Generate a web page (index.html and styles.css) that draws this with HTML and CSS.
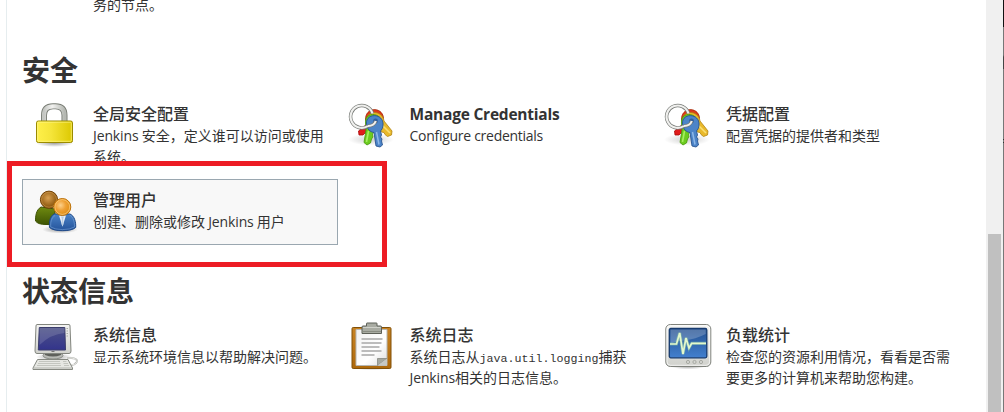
FILE: index.html
```html
<!DOCTYPE html>
<html lang="zh-CN">
<head>
<meta charset="utf-8">
<title>Jenkins</title>
<link rel="stylesheet" href="styles.css">
</head>
<body>
<svg class="defs" aria-hidden="true">
  <defs>
    <linearGradient id="gold"><stop offset="0" stop-color="#fff04a"/><stop offset=".4" stop-color="#f5e53a"/><stop offset="1" stop-color="#dcc800"/></linearGradient>
    <linearGradient id="metal"><stop offset="0" stop-color="#c4c6c2"/><stop offset=".4" stop-color="#f2f2f0"/><stop offset="1" stop-color="#b5b8b2"/></linearGradient>
    <linearGradient id="shell" x2="0" y2="1"><stop offset="0" stop-color="#f4f4f2"/><stop offset="1" stop-color="#d0d1cc"/></linearGradient>
    <linearGradient id="indigo" x2="0" y2="1"><stop offset="0" stop-color="#4d5286"/><stop offset="1" stop-color="#33348c"/></linearGradient>
    <linearGradient id="azure" x2="0" y2="1"><stop offset="0" stop-color="#24508f"/><stop offset="1" stop-color="#4280cf"/></linearGradient>
    <linearGradient id="wood" x2="0" y2="1"><stop offset="0" stop-color="#c98424"/><stop offset="1" stop-color="#ad680b"/></linearGradient>
    <linearGradient id="paper" x2="1" y2="1"><stop offset="0" stop-color="#f1f1f1"/><stop offset=".6" stop-color="#fff"/><stop offset="1" stop-color="#ddd"/></linearGradient>
    <radialGradient id="brown" cx=".45" cy=".4"><stop offset="0" stop-color="#d9a052"/><stop offset="1" stop-color="#8f5a10"/></radialGradient>
    <radialGradient id="orange" cx=".4" cy=".4"><stop offset="0" stop-color="#fcd08b"/><stop offset=".6" stop-color="#efa136"/><stop offset="1" stop-color="#e5941f"/></radialGradient>
    <linearGradient id="olive" x2="0" y2="1"><stop offset="0" stop-color="#6f8a10"/><stop offset="1" stop-color="#3f5503"/></linearGradient>
    <linearGradient id="blue" x2="0" y2="1"><stop offset="0" stop-color="#4a82c6"/><stop offset="1" stop-color="#24539b"/></linearGradient>
    <radialGradient id="shade"><stop offset="0" stop-color="#000" stop-opacity=".38"/><stop offset="1" stop-color="#000" stop-opacity="0"/></radialGradient>
    <symbol id="keys" viewBox="0 0 48 48">
      <ellipse cx="23" cy="38.500" rx="23" ry="6" fill="url(#shade)" opacity=".5"/>
      <path d="M19 23 10.500 30 11 34 15 34 17 32 20 31.500 25 26z" fill="#e01b1b" stroke="#a80808" stroke-width=".8"/>
      <path d="M17.500 19C17 5.500 34.500 5.500 35.500 17L32 24 20 23z" fill="#dc3a1b" stroke="#a52a08" stroke-width=".8"/>
      <path d="M18.500 20C18.500 8.500 34.500 9 36 20L44 30 43.500 34 39.500 35.500 37 33.500 36 31.500 33.500 31 28 24z" fill="#e9b92b" stroke="#b08312" stroke-width=".8"/>
      <path d="M33 23 42 32" stroke="#f8df75" stroke-width="1.600"/>
      <path d="M17.500 22C16.500 10.500 32 11 34 21L28 29 24.500 33 25 36 23.500 38 22.500 42 19 44 16 41.500 18 29z" fill="#6ccc1f" stroke="#459709" stroke-width=".8"/>
      <path d="M20.500 30 18.500 41" stroke="#a8ee62" stroke-width="1.600"/>
      <path d="M18.500 23C17.500 12 34 12 35 22 35.500 26.500 33.500 29 32.500 30L33.500 34 32.500 36 34 38 33.500 40 34.500 44 32 46 28 45 26 31.500C22 31 19 28 18.500 23z" fill="#4c84c8" stroke="#28548f" stroke-width=".9"/>
      <path d="M28.500 31 31 43.500" stroke="#8eb8e8" stroke-width="1.500"/>
      <circle cx="27.500" cy="20" r="2.400" fill="#315f9b"/>
      <path d="M20 25A11.200 11.200 0 1 1 24.500 12.500M27.800 20C26.500 23.500 23.500 25 20 25" fill="none" stroke="#777a76" stroke-width="3.500"/>
      <path d="M20 25A11.200 11.200 0 1 1 24.500 12.500M27.800 20C26.500 23.500 23.500 25 20 25" fill="none" stroke="#f0f0ee" stroke-width="2.100"/>
    </symbol>
  </defs>
</svg>
<div class="page">
  <main class="panel">
    <p class="previous">务的节点。</p>
    <section>
      <h2>安全</h2>
      <div class="grid">
        <a class="item">
          <svg class="icon" viewBox="0 0 48 48">
            <ellipse cx="23.500" cy="42" rx="19" ry="4" fill="url(#shade)"/>
            <path d="M12.500 22V14Q12.500 5 21.500 5H24Q33 5 33 14V22" transform="translate(.5 .3)" fill="none" stroke="#777b73" stroke-width="6"/>
            <path d="M12.500 22V14Q12.500 5 21.500 5H24Q33 5 33 14V22" transform="translate(.5 .3)" fill="none" stroke="url(#metal)" stroke-width="4.200"/>
            <rect x="5.500" y="20" width="36" height="21.500" rx="1.800" fill="url(#gold)" stroke="#9b8b00"/>
            <rect x="6.700" y="21.200" width="33.600" height="19.100" rx="1" fill="none" stroke="#fff792" stroke-opacity=".65"/>
          </svg>
          <div class="copy"><h3>全局安全配置</h3><p><span class="jk">Jenkins</span> 安全，定义谁可以访问或使用<br>系统。</p></div>
        </a>
        <a class="item">
          <svg class="icon"><use href="#keys"/></svg>
          <div class="copy"><h3 class="latin-title">Manage Credentials</h3><p class="latin">Configure credentials</p></div>
        </a>
        <a class="item">
          <svg class="icon"><use href="#keys"/></svg>
          <div class="copy"><h3>凭据配置</h3><p>配置凭据的提供者和类型</p></div>
        </a>
        <a class="item active">
          <svg class="icon" viewBox="0 0 48 48">
            <ellipse cx="29" cy="42.500" rx="18" ry="4" fill="url(#shade)"/>
            <path d="M10 20C5 23 4.500 29 4.500 34Q7 37.500 15 37.500H24V22z" fill="url(#olive)" stroke="#3d5204"/>
            <circle cx="18" cy="12.700" r="8.600" fill="url(#brown)" stroke="#724407"/>
            <circle cx="18" cy="12.700" r="7.500" fill="none" stroke="#e0ae68" stroke-opacity=".45"/>
            <path d="M23 27C18.500 30 18 36 18.500 40.500Q22 43.700 31.500 43.700 41 43.700 44.700 40.500C45 35 43.500 29 39 27z" fill="url(#blue)" stroke="#1f4a89"/>
            <path d="M24 28.500C20 31 19.500 36 19.700 40Q24 42.600 31.500 42.600 39 42.600 43.500 40C43.500 35 42.500 30 38.500 28" fill="none" stroke="#83aee0" stroke-opacity=".5"/>
            <path d="M28 28.500H35L31.500 39.500z" fill="#eaf0f7"/><path d="M30 29.500H33L32.200 32 32.500 37 31.500 39.500 30.500 37 30.900 32z" fill="#b9cce1"/>
            <circle cx="31.300" cy="20" r="8.500" fill="url(#orange)" stroke="#bd7209"/>
            <circle cx="31.300" cy="20" r="7.400" fill="none" stroke="#ffd895" stroke-opacity=".6"/>
          </svg>
          <div class="copy"><h3>管理用户</h3><p>创建、删除或修改 <span class="jk">Jenkins</span> 用户</p></div>
        </a>
      </div>
    </section>
    <section>
      <h2>状态信息</h2>
      <div class="grid">
        <a class="item">
          <svg class="icon" viewBox="0 0 48 48">
            <ellipse cx="23" cy="35" rx="18" ry="4" fill="url(#shade)"/>
            <path d="M34 41Q38 44.500 43 42.500C49 39 46 35.500 36 36" fill="none" stroke="#aaaca7" stroke-width="1.800"/>
            <path d="M34 41Q38 44.500 43 42.500C49 39 46 35.500 36 36" fill="none" stroke="#f3f3f1" stroke-width=".9"/>
            <ellipse cx="22" cy="33.500" rx="10" ry="3.500" fill="#b9bbb6" stroke="#8a8d87"/>
            <path d="M14 31.500H30V33Q22 36 14 33z" fill="#5e605b"/>
            <path d="M6 2.500H38Q39 2.500 39 4L40 29Q40 31.500 38 31.500H6Q4 31.500 4 29L5 4Q5 2.500 6 2.500z" fill="url(#shell)" stroke="#82857e"/>
            <path d="M8.300 5.500H33.800L34.500 28H7.300z" fill="url(#indigo)" stroke="#3b3d6c"/>
            <path d="M8.800 6H33.400V11Q20 12 8.500 23z" fill="#fff" opacity=".14"/>
            <path d="M35.500 6.500H37M35.500 9H37M35.500 11.500H37M35.500 14H37" stroke="#a9aca5"/>
            <path d="M20.500 29.500H23.500" stroke="#777"/>
            <path d="M6.500 37.500H37L41.500 46V47.500H2V46z" fill="#e6e7e3" stroke="#858881"/>
            <path d="M8 39.500H29M7 41.500H29.500M6 43.500H30M32 39.500H35.500M32.500 41.500H37M33 43.500H38" stroke="#c3c5bf"/>
            <path d="M3 46H41" stroke="#b0b2ac"/>
          </svg>
          <div class="copy"><h3>系统信息</h3><p>显示系统环境信息以帮助解决问题。</p></div>
        </a>
        <a class="item">
          <svg class="icon" viewBox="0 0 48 48">
            <ellipse cx="23.500" cy="46" rx="20" ry="2" fill="url(#shade)"/>
            <rect x="4" y="5.500" width="39" height="41" rx="1.200" fill="url(#wood)" stroke="#815008"/>
            <path d="M8 7.500H39V43.500H8z" fill="url(#paper)" stroke="#b6b6b2"/>
            <path d="M29.500 43.500V36.500H39z" fill="#a5a8a0" stroke="#858881" stroke-width=".8"/>
            <path d="M39 36.500V43.500H29.500z" fill="#c6c8c3"/>
            <path d="M13.500 17H34.500M13.500 21H33.500M13.500 25H31.500M13.500 29H33.500M13.500 33H26.500" stroke="#bcbcbc" stroke-width="1.800"/>
            <path d="M15 4H18.500V1.500Q18.500 1 19 1H28.500Q29 1 29 1.500V4H32.500Q33.500 4 33.500 5V11.500H14V5Q14 4 15 4z" fill="#a9aca3" stroke="#5d6058"/>
            <path d="M15 5.500H32.500" stroke="#cfd1ca"/><path d="M14.500 9.500H33" stroke="#898c82"/>
          </svg>
          <div class="copy"><h3>系统日志</h3><p>系统日志从<code>java.util.logging</code>捕获<br><span class="jk">Jenkins</span>相关的日志信息。</p></div>
        </a>
        <a class="item">
          <svg class="icon" viewBox="0 0 48 48">
            <ellipse cx="24" cy="44" rx="18" ry="3.500" fill="url(#shade)"/>
            <rect x="1.800" y="2.500" width="45" height="42" rx="4.500" fill="url(#shell)" stroke="#7f827c"/>
            <rect x="3" y="3.700" width="42.600" height="39.600" rx="3.500" fill="none" stroke="#fff" stroke-opacity=".7"/>
            <rect x="5.300" y="6.500" width="37.500" height="29.300" rx="1.500" fill="url(#azure)" stroke="#173b6f" stroke-width="1.300"/>
            <path d="M6.500 7.500H41.700V12Q32 17 20 18.500 11 19 6.500 22z" fill="#fff" opacity=".22"/>
            <path d="M6 22H12.500L15.700 11 19 32 22 16 25 26 27.700 21.300H42" fill="none" stroke="#8fd0a3" stroke-opacity=".5" stroke-width="3.200"/>
            <path d="M6 22H12.500L15.700 11 19 32 22 16 25 26 27.700 21.300H42" fill="none" stroke="#e4f8cc" stroke-width="1.700"/>
            <g fill="#d5d6d2" stroke="#a1a49d" stroke-width=".9"><circle cx="24" cy="40" r="1.600"/><circle cx="30.500" cy="40" r="1.600"/><circle cx="37" cy="40" r="1.600"/></g>
          </svg>
          <div class="copy"><h3>负载统计</h3><p>检查您的资源利用情况，看看是否需<br>要更多的计算机来帮助您构建。</p></div>
        </a>
      </div>
    </section>
  </main>
  <div class="scrollbar"><div class="thumb"></div></div>
  <div class="edge"></div>
  <div class="highlight"></div>
</div>
</body>
</html>
```
FILE: styles.css
```css
* { box-sizing: border-box; }
body { margin: 0; background: #fff; color: #333; font: 14px/21px "Noto Sans", "Noto Sans CJK SC", sans-serif; }
h2, h3, p { margin: 0; }
.defs { position: absolute; width: 0; height: 0; }
.page { position: relative; display: flex; width: 1004px; height: 412px; overflow: hidden; }
.panel { width: 980px; margin-left: 6px; padding-left: 15px; border-left: 1px solid #e6edef; flex: none; font-family: "Noto Sans CJK SC", sans-serif; }
.previous { height: 24px; padding-left: 71px; line-height: 21px; margin-top: -6px; margin-bottom: 6px; }
h2 { height: 69px; padding-top: 25px; font-size: 28px; line-height: 40px; font-weight: 700; }
.grid { display: grid; grid-template-columns: repeat(3, 316.5px); }
.item { display: flex; align-items: flex-start; min-height: 66px; padding: 7px 7px 2px 8px; border: 1px solid transparent; }
.grid .item:first-child { height: 86px; }
.active { width: 316px; background: #f8f8f8; border-color: #9aa7b0; }
.icon { width: 48px; height: 48px; flex: none; margin-right: 14px; }
.copy { white-space: nowrap; padding-top: 1px; }
h3 { font-size: 16px; line-height: 22px; font-weight: 500; }
.copy p { line-height: 21px; padding-top: 1px; }
.latin, .jk { font-family: "Open Sans", "Noto Sans", sans-serif; }
.jk { letter-spacing: -0.12px; }
.latin { letter-spacing: -0.28px; }
.latin-title { font-family: "Open Sans", "Noto Sans", sans-serif; font-weight: 700; font-size: 15.5px; letter-spacing: -0.22px; padding-top: 1px; margin-bottom: -1px; }
code { font: 11.67px/14px "Liberation Mono", monospace; }
.scrollbar { width: 17px; background: #f0f0f0; padding: 234px 2px 0 2px; flex: none; }
.thumb { height: 178px; background: #c0c0c0; }
.edge { width: 1px; background: linear-gradient(#111 0 27px, #777 27px 55px, #444 57px 69px, #777 69px 139px, #333 139px 140px, #777 140px 142px, #333 142px 143px, #777 143px); }
.highlight { position: absolute; left: 7px; top: 161px; width: 380px; height: 106px; border: 5px solid #ed1c24; }
```
